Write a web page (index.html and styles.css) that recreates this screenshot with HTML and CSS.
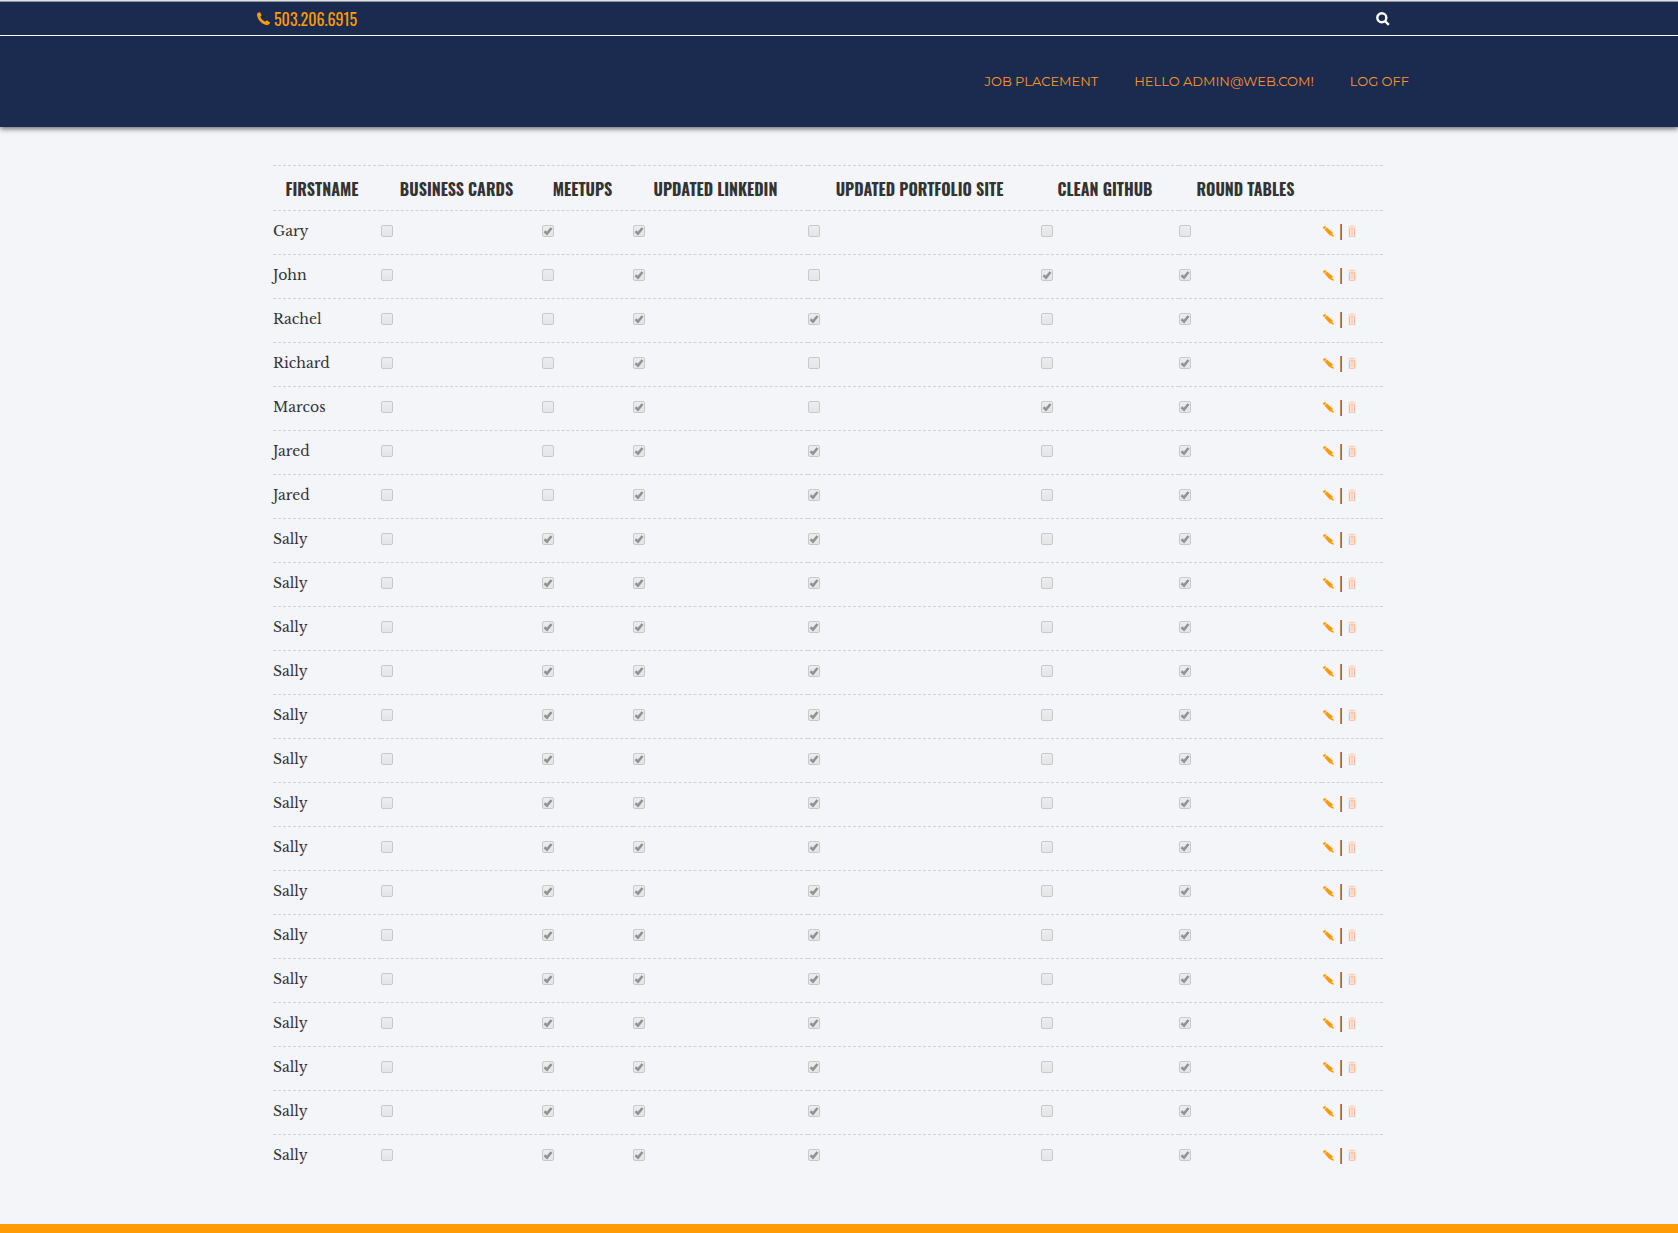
FILE: index.html
```html
<!DOCTYPE html>
<html lang="en">
<head>
<meta charset="utf-8">
<meta name="viewport" content="width=device-width, initial-scale=1">
<title>Job Placement</title>
<link rel="stylesheet" href="styles.css">
</head>
<body>
<svg class="sprite" aria-hidden="true">
  <symbol id="pencil" viewBox="0 0 11 11"><path d="M0 1.300 1.300 0 2.700.4 3.300 1.200 1.200 3.300.4 2.700ZM1.600 3.700 3.700 1.600 9.600 6.300 9.300 8.300 10 9 11 10.300 10.300 11 9 10 8 9.600 6.800 9.500Z"/></symbol>
  <symbol id="trash" viewBox="0 0 8 12"><path d="M0 2.500V1.500h2V.5h4v1h2v1z" fill="#fdd3b8"/><path d="M1.500 4v7.500M6.500 4v7.500" stroke="#fbb994" stroke-width="1.400"/><path d="M1 3.500h6M1 11.500h6" stroke="#fcc8b4"/><path d="M4 4v6.500" stroke="#fcc0b8" stroke-width="1.400"/></symbol>
</svg>
<header class="site-header">
  <div class="topbar">
    <div class="container topbar-inner">
      <a class="phone" href="tel:5032066915">
        <svg class="icon-phone" viewBox="0 0 13 13" aria-hidden="true"><path d="M0 2.200C.2 1 1.400.3 2.700.2c.4 0 .5.2.7.6l1 2.200c.1.4-.1.7-.5 1.100-.5.4-.6.7-.4 1.100C4.300 6.900 6.200 8.700 7.900 9.500c.4.2.7 0 1.100-.5.4-.5.700-.6 1.100-.4l2.400 1.300c.4.200.5.400.4.800-.3 1.300-1.200 2.100-2.500 2.200C5.500 13.100.1 7.600 0 2.200z"/></svg>
        <span>503.206.6915</span>
      </a>
      <button class="search" type="button" aria-label="Search">
        <svg class="icon-search" viewBox="0 0 14 14" aria-hidden="true"><circle cx="5.800" cy="5.800" r="4.500"/><path d="M9 9l3.800 3.800"/></svg>
      </button>
    </div>
  </div>
  <nav class="container nav">
    <a href="#">JOB PLACEMENT</a>
    <a href="#">HELLO ADMIN@WEB.COM!</a>
    <a href="#">LOG OFF</a>
  </nav>
</header>
<main class="container content">
  <table class="students">
    <colgroup><col class="c-name"><col class="c-cards"><col class="c-meetups"><col class="c-linkedin"><col class="c-portfolio"><col class="c-github"><col class="c-tables"><col class="c-actions"></colgroup>
    <thead>
      <tr><th>FIRSTNAME</th><th>BUSINESS CARDS</th><th>MEETUPS</th><th>UPDATED LINKEDIN</th><th>UPDATED PORTFOLIO SITE</th><th>CLEAN GITHUB</th><th>ROUND TABLES</th><th></th></tr>
    </thead>
    <tbody id="rows"></tbody>
  </table>
</main>
<footer class="site-footer"></footer>
<script src="app.js"></script>
</body>
</html>
```
FILE: styles.css
```css
* { box-sizing: border-box; }

body {
  margin: 0;
  min-height: 100vh;
  display: flex;
  flex-direction: column;
  background: #f4f5f9;
  color: #333;
  font-family: "Libre Baskerville", "Liberation Serif", serif;
  font-size: 14px;
}

.sprite { display: none; }

.container {
  width: 100%;
  max-width: 1170px;
  margin: 0 auto;
}

.site-header {
  background: #1a2b4f;
  border-top: 1px solid #dfe1e0;
  box-shadow: 0 2px 5px rgba(0, 0, 0, .55);
}

.topbar {
  border-top: 1px solid #8f969f;
  border-bottom: 1px solid #fff;
}

.topbar-inner {
  display: flex;
  align-items: center;
  justify-content: space-between;
  height: 33px;
  padding: 0 34px 0 3px;
}

.phone {
  display: flex;
  align-items: center;
  gap: 4px;
  color: #ff9b04;
  text-decoration: none;
  font: 16px "Oswald", "Roboto Condensed", "Liberation Sans Narrow", "Liberation Sans", sans-serif;
}

.icon-phone { width: 13px; height: 13px; fill: currentColor; }

.search {
  display: flex;
  padding: 1px 0 0;
  border: 0;
  background: none;
  color: #fff;
}

.icon-search {
  width: 14px;
  height: 14px;
  fill: none;
  stroke: currentColor;
  stroke-width: 2.4;
}

.nav {
  display: flex;
  align-items: center;
  justify-content: flex-end;
  gap: 36px;
  height: 91px;
  padding: 0 15px 2px;
}

.nav a {
  color: #ff9426;
  text-decoration: none;
  font: 13px "Montserrat", "Inter", sans-serif;
}

.content {
  flex: 1;
  padding: 38px 41px 46px 19px;
}

.students {
  width: 100%;
  table-layout: fixed;
  border-collapse: separate;
  border-spacing: 0;
}

.c-name { width: 108px; }
.c-cards { width: 161px; }
.c-meetups { width: 91px; }
.c-linkedin { width: 175px; }
.c-portfolio { width: 233px; }
.c-github { width: 138px; }
.c-tables { width: 143px; }
.c-actions { width: 61px; }

.students th,
.students td {
  height: 44px;
  padding: 0 10px 0 0;
  border-top: 1px dashed #d0d2d5;
  vertical-align: middle;
  white-space: nowrap;
}

.students th {
  height: 45px;
  padding-top: 1px;
  text-align: center;
  font: bold 16px "Oswald", "Roboto Condensed", "Liberation Sans Narrow", "Liberation Sans", sans-serif;
}

.students td { line-height: 20px; padding-bottom: 3px; }

.check {
  appearance: none;
  display: block;
  width: 12px;
  height: 12px;
  margin: 0;
  border: 1px solid #c8c9cb;
  border-radius: 2px;
  background: linear-gradient(#ededed, #e4e5e7);
}

.check:checked {
  background:
    url("data:image/svg+xml,%3Csvg xmlns='http://www.w3.org/2000/svg' viewBox='0 0 10 10'%3E%3Cpath d='M1.500 5.300 4 7.600 8.500 2' fill='none' stroke='%23929292' stroke-width='2.600'/%3E%3C/svg%3E") center / 10px 10px no-repeat,
    linear-gradient(#ededed, #e4e5e7);
}

.actions {
  display: flex;
  align-items: center;
  gap: 5px;
  padding-left: 1px;
  color: #1a3a44;
}

.actions a { display: flex; color: #ff9b04; }
.icon-pencil { width: 11px; height: 11px; fill: currentColor; }
.icon-trash { width: 8px; height: 12px; }

.site-footer { height: 9px; background: #ff9b04; }
```
FILE: app.js
```js
// Each student: name, then one flag per milestone column.
const milestones = ["Business cards", "Meetups", "Updated LinkedIn", "Updated portfolio site", "Clean GitHub", "Round tables"];
const students = [
  ["Gary", "011000"],
  ["John", "001011"],
  ["Rachel", "001101"],
  ["Richard", "001001"],
  ["Marcos", "001011"],
  ["Jared", "001101"],
  ["Jared", "001101"],
  ...Array(15).fill(["Sally", "011101"])
];

document.getElementById("rows").innerHTML = students.map(([name, flags]) => `
  <tr>
    <td>${name}</td>
    ${milestones.map((label, i) => `<td><input class="check" type="checkbox" disabled aria-label="${label}: ${name}"${flags[i] === "1" ? " checked" : ""}></td>`).join("")}
    <td><div class="actions">
      <a href="#" aria-label="Edit ${name}"><svg class="icon-pencil"><use href="#pencil"/></svg></a>
      <span>|</span>
      <a href="#" aria-label="Delete ${name}"><svg class="icon-trash"><use href="#trash"/></svg></a>
    </div></td>
  </tr>`).join("");
```
